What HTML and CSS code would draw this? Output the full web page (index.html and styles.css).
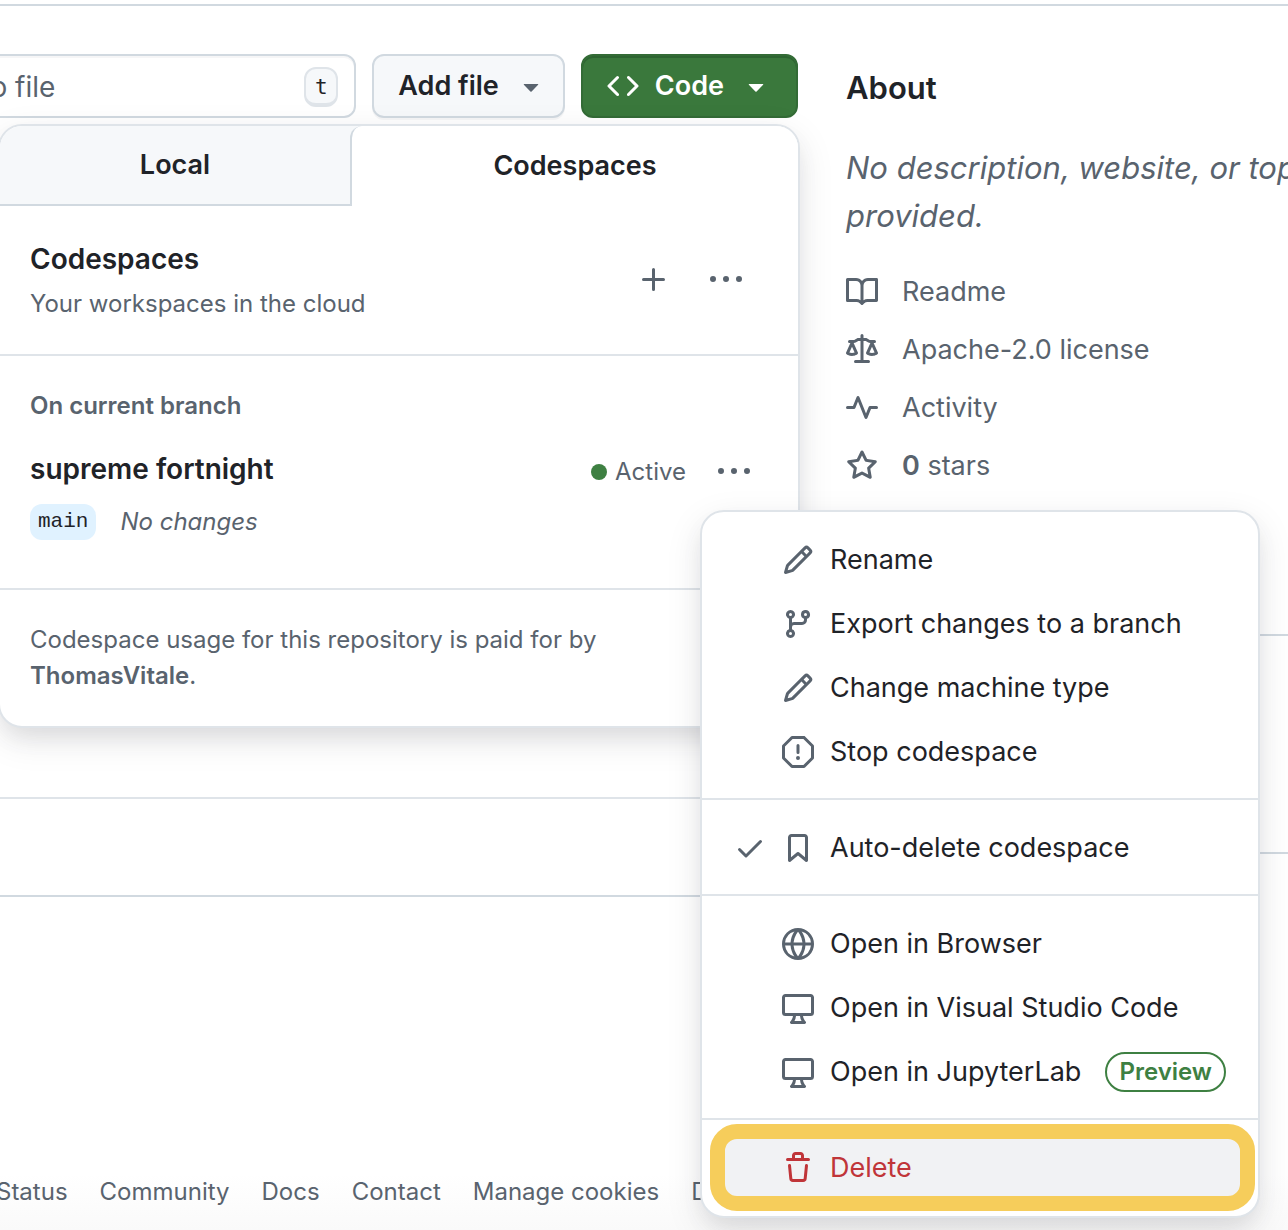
FILE: index.html
```html
<!DOCTYPE html>
<html lang="en">
<head>
<meta charset="utf-8">
<meta name="viewport" content="width=device-width, initial-scale=1">
<title>Codespaces</title>
<link rel="stylesheet" href="styles.css">
</head>
<body>
<div class="page">
  <main class="layout">
    <div class="content">
      <div class="toolbar">
        <div class="search">
          <input class="search-input" type="text" placeholder="Go to file" aria-label="Go to file">
          <kbd class="key">t</kbd>
        </div>
        <button class="btn" type="button">Add file
          <svg class="icon muted" viewBox="0 0 16 16" aria-hidden="true"><path d="m4.427 7.427 3.396 3.396a.25.25 0 0 0 .354 0l3.396-3.396A.25.25 0 0 0 11.396 7H4.604a.25.25 0 0 0-.177.427Z"/></svg>
        </button>
        <div class="code-menu">
          <button class="btn btn-primary" type="button" aria-expanded="true">
            <svg class="icon" viewBox="0 0 16 16" aria-hidden="true"><path d="m11.28 3.22 4.25 4.25a.75.75 0 0 1 0 1.06l-4.25 4.25a.749.749 0 0 1-1.275-.326.749.749 0 0 1 .215-.734L13.94 8l-3.72-3.72a.749.749 0 0 1 .326-1.275.749.749 0 0 1 .734.215Zm-6.56 0a.751.751 0 0 1 1.042.018.751.751 0 0 1 .018 1.042L2.06 8l3.72 3.72a.749.749 0 0 1-.326 1.275.749.749 0 0 1-.734-.215L.47 8.53a.75.75 0 0 1 0-1.06Z"/></svg>
            Code
            <svg class="icon" viewBox="0 0 16 16" aria-hidden="true"><path d="m4.427 7.427 3.396 3.396a.25.25 0 0 0 .354 0l3.396-3.396A.25.25 0 0 0 11.396 7H4.604a.25.25 0 0 0-.177.427Z"/></svg>
          </button>

          <div class="popover">
            <div class="tabs" role="tablist">
              <button class="tab" type="button" role="tab" aria-selected="false">Local</button>
              <button class="tab tab-active" type="button" role="tab" aria-selected="true">Codespaces</button>
            </div>

            <header class="panel panel-head">
              <div class="head-text">
                <h2 class="title">Codespaces</h2>
                <p class="note">Your workspaces in the cloud</p>
              </div>
              <div class="actions">
                <button class="icon-btn" type="button" aria-label="Create a codespace">
                  <svg class="icon" viewBox="0 0 16 16" aria-hidden="true"><path d="M7.75 2a.75.75 0 0 1 .75.75V7h4.25a.75.75 0 0 1 0 1.5H8.5v4.25a.75.75 0 0 1-1.5 0V8.5H2.75a.75.75 0 0 1 0-1.5H7V2.75A.75.75 0 0 1 7.75 2Z"/></svg>
                </button>
                <button class="icon-btn" type="button" aria-label="Repository configuration">
                  <svg class="icon" viewBox="0 0 16 16" aria-hidden="true"><path d="M8 9a1.5 1.5 0 1 0 0-3 1.5 1.5 0 0 0 0 3ZM1.5 9a1.5 1.5 0 1 0 0-3 1.5 1.5 0 0 0 0 3Zm13 0a1.5 1.5 0 1 0 0-3 1.5 1.5 0 0 0 0 3Z"/></svg>
                </button>
              </div>
            </header>

            <section class="panel panel-branch">
              <h3 class="group-label">On current branch</h3>
              <div class="space-row">
                <h4 class="title">supreme fortnight</h4>
                <span class="status"><span class="dot"></span>Active</span>
                <div class="space-menu">
                  <button class="icon-btn" type="button" aria-label="Codespace actions" aria-expanded="true">
                    <svg class="icon" viewBox="0 0 16 16" aria-hidden="true"><path d="M8 9a1.5 1.5 0 1 0 0-3 1.5 1.5 0 0 0 0 3ZM1.5 9a1.5 1.5 0 1 0 0-3 1.5 1.5 0 0 0 0 3Zm13 0a1.5 1.5 0 1 0 0-3 1.5 1.5 0 0 0 0 3Z"/></svg>
                  </button>

                  <div class="menu" role="menu">
                    <div class="menu-group">
                      <button class="menu-item" type="button" role="menuitem">
                        <svg class="icon" viewBox="0 0 16 16" aria-hidden="true"><path d="M11.013 1.427a1.75 1.75 0 0 1 2.474 0l1.086 1.086a1.75 1.75 0 0 1 0 2.474l-8.61 8.61c-.21.21-.47.364-.756.445l-3.251.93a.75.75 0 0 1-.927-.928l.929-3.25c.081-.286.235-.547.445-.758l8.61-8.61Zm.176 4.823L9.75 4.81l-6.286 6.287a.253.253 0 0 0-.064.108l-.558 1.953 1.953-.558a.253.253 0 0 0 .108-.064Zm1.238-3.763a.25.25 0 0 0-.354 0L10.811 3.75l1.439 1.44 1.263-1.263a.25.25 0 0 0 0-.354Z"/></svg>
                        Rename
                      </button>
                      <button class="menu-item" type="button" role="menuitem">
                        <svg class="icon" viewBox="0 0 16 16" aria-hidden="true"><path d="M9.5 3.25a2.25 2.25 0 1 1 3 2.122V6A2.5 2.5 0 0 1 10 8.5H6a1 1 0 0 0-1 1v1.128a2.251 2.251 0 1 1-1.5 0V5.372a2.25 2.25 0 1 1 1.5 0v1.836A2.493 2.493 0 0 1 6 7h4a1 1 0 0 0 1-1v-.628A2.25 2.25 0 0 1 9.5 3.25Zm-6 0a.75.75 0 1 0 1.5 0 .75.75 0 0 0-1.5 0Zm8.25-.75a.75.75 0 1 0 0 1.5.75.75 0 0 0 0-1.5ZM4.25 12a.75.75 0 1 0 0 1.5.75.75 0 0 0 0-1.5Z"/></svg>
                        Export changes to a branch
                      </button>
                      <button class="menu-item" type="button" role="menuitem">
                        <svg class="icon" viewBox="0 0 16 16" aria-hidden="true"><path d="M11.013 1.427a1.75 1.75 0 0 1 2.474 0l1.086 1.086a1.75 1.75 0 0 1 0 2.474l-8.61 8.61c-.21.21-.47.364-.756.445l-3.251.93a.75.75 0 0 1-.927-.928l.929-3.25c.081-.286.235-.547.445-.758l8.61-8.61Zm.176 4.823L9.75 4.81l-6.286 6.287a.253.253 0 0 0-.064.108l-.558 1.953 1.953-.558a.253.253 0 0 0 .108-.064Zm1.238-3.763a.25.25 0 0 0-.354 0L10.811 3.75l1.439 1.44 1.263-1.263a.25.25 0 0 0 0-.354Z"/></svg>
                        Change machine type
                      </button>
                      <button class="menu-item" type="button" role="menuitem">
                        <svg class="icon" viewBox="0 0 16 16" aria-hidden="true"><path d="M4.47.22A.749.749 0 0 1 5 0h6c.199 0 .389.079.53.22l4.25 4.25c.141.14.22.331.22.53v6a.749.749 0 0 1-.22.53l-4.25 4.25A.749.749 0 0 1 11 16H5a.749.749 0 0 1-.53-.22L.22 11.53A.749.749 0 0 1 0 11V5c0-.199.079-.389.22-.53Zm.84 1.28L1.5 5.31v5.38l3.81 3.81h5.38l3.81-3.81V5.31L10.69 1.5ZM8 4a.75.75 0 0 1 .75.75v3.5a.75.75 0 0 1-1.5 0v-3.5A.75.75 0 0 1 8 4Zm0 8a1 1 0 1 1 0-2 1 1 0 0 1 0 2Z"/></svg>
                        Stop codespace
                      </button>
                    </div>
                    <div class="menu-group">
                      <button class="menu-item menu-item-checked" type="button" role="menuitemcheckbox" aria-checked="true">
                        <svg class="icon" viewBox="0 0 16 16" aria-hidden="true"><path d="M13.78 4.22a.75.75 0 0 1 0 1.06l-7.25 7.25a.75.75 0 0 1-1.06 0L2.22 9.28a.751.751 0 0 1 .018-1.042.751.751 0 0 1 1.042-.018L6 10.94l6.72-6.72a.75.75 0 0 1 1.06 0Z"/></svg>
                        <svg class="icon" viewBox="0 0 16 16" aria-hidden="true"><path d="M3 2.75C3 1.784 3.784 1 4.75 1h6.5c.966 0 1.75.784 1.75 1.75v11.5a.75.75 0 0 1-1.227.579L8 11.722l-3.773 3.107A.751.751 0 0 1 3 14.25Zm1.75-.25a.25.25 0 0 0-.25.25v9.91l3.023-2.489a.75.75 0 0 1 .954 0l3.023 2.49V2.75a.25.25 0 0 0-.25-.25Z"/></svg>
                        Auto-delete codespace
                      </button>
                    </div>
                    <div class="menu-group">
                      <button class="menu-item" type="button" role="menuitem">
                        <svg class="icon" viewBox="0 0 16 16" aria-hidden="true"><path d="M8 0a8 8 0 1 1 0 16A8 8 0 0 1 8 0ZM5.78 8.75a9.64 9.64 0 0 0 1.363 4.177c.255.426.542.832.857 1.215.245-.296.551-.705.857-1.215A9.64 9.64 0 0 0 10.22 8.75Zm4.44-1.5a9.64 9.64 0 0 0-1.363-4.177c-.307-.51-.612-.919-.857-1.215a9.927 9.927 0 0 0-.857 1.215A9.64 9.64 0 0 0 5.78 7.25Zm-5.944 1.5H1.543a6.507 6.507 0 0 0 4.666 5.5c-.123-.181-.24-.365-.352-.552-.715-1.192-1.437-2.874-1.581-4.948Zm-2.733-1.5h2.733c.144-2.074.866-3.756 1.58-4.948.12-.197.237-.381.353-.552a6.507 6.507 0 0 0-4.666 5.5Zm10.181 1.5c-.144 2.074-.866 3.756-1.58 4.948-.12.197-.237.381-.353.552a6.507 6.507 0 0 0 4.666-5.5Zm2.733-1.5a6.507 6.507 0 0 0-4.666-5.5c.123.181.24.365.353.552.714 1.192 1.436 2.874 1.58 4.948Z"/></svg>
                        Open in Browser
                      </button>
                      <button class="menu-item" type="button" role="menuitem">
                        <svg class="icon" viewBox="0 0 16 16" aria-hidden="true"><path d="M14.25 1c.966 0 1.75.784 1.75 1.75v7.5A1.75 1.75 0 0 1 14.25 12h-3.727c.099 1.041.52 1.872 1.292 2.757A.752.752 0 0 1 11.25 16h-6.5a.75.75 0 0 1-.565-1.243c.772-.885 1.192-1.716 1.292-2.757H1.75A1.75 1.75 0 0 1 0 10.25v-7.5C0 1.784.784 1 1.75 1ZM1.75 2.5a.25.25 0 0 0-.25.25v7.5c0 .138.112.25.25.25h12.5a.25.25 0 0 0 .25-.25v-7.5a.25.25 0 0 0-.25-.25ZM9.018 12H6.982a5.72 5.72 0 0 1-.765 2.5h3.566a5.72 5.72 0 0 1-.765-2.5Z"/></svg>
                        Open in Visual Studio Code
                      </button>
                      <button class="menu-item" type="button" role="menuitem">
                        <svg class="icon" viewBox="0 0 16 16" aria-hidden="true"><path d="M14.25 1c.966 0 1.75.784 1.75 1.75v7.5A1.75 1.75 0 0 1 14.25 12h-3.727c.099 1.041.52 1.872 1.292 2.757A.752.752 0 0 1 11.25 16h-6.5a.75.75 0 0 1-.565-1.243c.772-.885 1.192-1.716 1.292-2.757H1.75A1.75 1.75 0 0 1 0 10.25v-7.5C0 1.784.784 1 1.75 1ZM1.75 2.5a.25.25 0 0 0-.25.25v7.5c0 .138.112.25.25.25h12.5a.25.25 0 0 0 .25-.25v-7.5a.25.25 0 0 0-.25-.25ZM9.018 12H6.982a5.72 5.72 0 0 1-.765 2.5h3.566a5.72 5.72 0 0 1-.765-2.5Z"/></svg>
                        Open in JupyterLab
                        <span class="label">Preview</span>
                      </button>
                    </div>
                    <div class="menu-group">
                      <button class="menu-item menu-item-danger" type="button" role="menuitem">
                        <svg class="icon" viewBox="0 0 16 16" aria-hidden="true"><path d="M11 1.75V3h2.25a.75.75 0 0 1 0 1.5H2.75a.75.75 0 0 1 0-1.5H5V1.75C5 .784 5.784 0 6.75 0h2.5C10.216 0 11 .784 11 1.75ZM4.496 6.675l.66 6.6a.25.25 0 0 0 .249.225h5.19a.25.25 0 0 0 .249-.225l.66-6.6a.75.75 0 0 1 1.492.149l-.66 6.6A1.748 1.748 0 0 1 10.595 15h-5.19a1.75 1.75 0 0 1-1.741-1.575l-.66-6.6a.75.75 0 1 1 1.492-.15ZM6.5 1.75V3h3V1.75a.25.25 0 0 0-.25-.25h-2.5a.25.25 0 0 0-.25.25Z"/></svg>
                        Delete
                      </button>
                    </div>
                  </div>
                </div>
              </div>
              <div class="branch-row">
                <a class="branch" href="#">main</a>
                <em class="note">No changes</em>
              </div>
            </section>

            <p class="panel note billing">Codespace usage for this repository is paid for by <strong>ThomasVitale</strong>.</p>
          </div>
        </div>
      </div>

      <div class="files">
        <div class="files-body"></div>
        <div class="files-row"></div>
      </div>
    </div>

    <aside class="sidebar">
      <section class="about">
        <h2 class="about-title">About</h2>
        <p class="about-text">No description, website, or topics provided.</p>
        <ul class="facts">
          <li><a class="fact" href="#">
            <svg class="icon" viewBox="0 0 16 16" aria-hidden="true"><path d="M0 1.75A.75.75 0 0 1 .75 1h4.253c1.227 0 2.317.59 3 1.501A3.743 3.743 0 0 1 11.006 1h4.245a.75.75 0 0 1 .75.75v10.5a.75.75 0 0 1-.75.75h-4.507a2.25 2.25 0 0 0-1.591.659l-.622.621a.75.75 0 0 1-1.06 0l-.622-.621A2.25 2.25 0 0 0 5.258 13H.75a.75.75 0 0 1-.75-.75Zm7.251 10.324.004-5.073-.002-2.253A2.25 2.25 0 0 0 5.003 2.5H1.5v9h3.757a3.75 3.75 0 0 1 1.994.574ZM8.755 4.75l-.004 7.322a3.752 3.752 0 0 1 1.992-.572H14.5v-9h-3.495a2.25 2.25 0 0 0-2.25 2.25Z"/></svg>
            <span>Readme</span></a></li>
          <li><a class="fact" href="#">
            <svg class="icon" viewBox="0 0 16 16" aria-hidden="true"><path d="M8.75.75V2h.985c.304 0 .603.08.867.231l1.29.736c.038.022.08.033.124.033h2.234a.75.75 0 0 1 0 1.5h-.427l2.111 4.692a.75.75 0 0 1-.154.838l-.53-.53.529.531-.001.002-.002.002-.006.006-.006.005-.01.01-.045.04c-.21.176-.441.327-.686.45C14.556 10.78 13.88 11 13 11a4.498 4.498 0 0 1-2.023-.454 3.544 3.544 0 0 1-.686-.45l-.045-.04-.016-.015-.006-.006-.004-.004v-.001a.75.75 0 0 1-.154-.838L12.178 4.5h-.162c-.305 0-.604-.079-.868-.231l-1.29-.736a.245.245 0 0 0-.124-.033H8.75V13h2.5a.75.75 0 0 1 0 1.5h-6.5a.75.75 0 0 1 0-1.5h2.5V3.5h-.984a.245.245 0 0 0-.124.033l-1.289.737c-.265.15-.564.23-.869.23h-.162l2.112 4.692a.75.75 0 0 1-.154.838l-.53-.53.529.531-.001.002-.002.002-.006.006-.016.015-.045.04c-.21.176-.441.327-.686.45C4.556 10.78 3.88 11 3 11a4.498 4.498 0 0 1-2.023-.454 3.544 3.544 0 0 1-.686-.45l-.045-.04-.016-.015-.006-.006-.004-.004v-.001a.75.75 0 0 1-.154-.838L2.178 4.5H1.75a.75.75 0 0 1 0-1.5h2.234a.249.249 0 0 0 .125-.033l1.288-.737c.265-.15.564-.23.869-.23h.984V.75a.75.75 0 0 1 1.5 0Zm2.945 8.477c.285.135.718.273 1.305.273s1.02-.138 1.305-.273L13 6.327Zm-10 0c.285.135.718.273 1.305.273s1.02-.138 1.305-.273L3 6.327Z"/></svg>
            <span>Apache-2.0 license</span></a></li>
          <li><a class="fact" href="#">
            <svg class="icon" viewBox="0 0 16 16" aria-hidden="true"><path d="M6 2c.306 0 .582.187.696.471L10 10.731l1.304-3.26A.751.751 0 0 1 12 7h3.25a.75.75 0 0 1 0 1.5h-2.742l-1.812 4.528a.751.751 0 0 1-1.392 0L6 4.77 4.696 8.03A.75.75 0 0 1 4 8.5H.75a.75.75 0 0 1 0-1.5h2.742l1.812-4.529A.751.751 0 0 1 6 2Z"/></svg>
            <span>Activity</span></a></li>
          <li><a class="fact" href="#">
            <svg class="icon" viewBox="0 0 16 16" aria-hidden="true"><path d="M8 .25a.75.75 0 0 1 .673.418l1.882 3.815 4.21.612a.75.75 0 0 1 .416 1.279l-3.046 2.97.719 4.192a.751.751 0 0 1-1.088.791L8 12.347l-3.766 1.98a.75.75 0 0 1-1.088-.79l.72-4.194L.818 6.374a.75.75 0 0 1 .416-1.28l4.21-.611L7.327.668A.75.75 0 0 1 8 .25Zm0 2.445L6.615 5.5a.75.75 0 0 1-.564.41l-3.097.45 2.24 2.184a.75.75 0 0 1 .216.664l-.528 3.084 2.769-1.456a.75.75 0 0 1 .698 0l2.77 1.456-.53-3.084a.75.75 0 0 1 .216-.664l2.24-2.183-3.096-.45a.75.75 0 0 1-.564-.41L8 2.694Z"/></svg>
            <span><strong>0</strong> stars</span></a></li>
        </ul>
      </section>
      <section class="side-block"></section>
    </aside>
  </main>

  <footer class="footer">
    <a href="#">Status</a>
    <a href="#">Community</a>
    <a href="#">Docs</a>
    <a href="#">Contact</a>
    <a href="#">Manage cookies</a>
    <a href="#">Do not share my personal information</a>
  </footer>
</div>
</body>
</html>
```
FILE: styles.css
```css
:root {
  --fg: #1f2328;
  --muted: #59636e;
  --border: #d1d9e0;
  --border-soft: #dfe4e9;
  --subtle: #f6f8fa;
  --green: #3a783c;
  --text-xl: 31px;
  --text-l: 28px;
  --text-m: 27px;
  --text-s: 24px;
}

* {
  box-sizing: border-box;
}

body {
  margin: 0;
  overflow: hidden;
  background: #fff;
  color: var(--fg);
  font-family: Inter, "Liberation Sans", sans-serif;
  font-size: var(--text-m);
  line-height: 42px;
}

h2, h3, h4, p, ul {
  margin: 0;
  padding: 0;
}

h2, h3, h4, strong {
  font-weight: 600;
}

button {
  padding: 0;
  border: 0;
  background: none;
  color: inherit;
  font: inherit;
  cursor: pointer;
}

a {
  color: inherit;
  text-decoration: none;
}

.icon {
  flex: none;
  display: block;
  width: 32px;
  height: 32px;
  fill: currentColor;
}

.muted {
  color: var(--muted);
}

/* The page is wider than the window and is cut off on both sides. */
.page {
  display: flex;
  flex-direction: column;
  min-height: 100vh;
  margin: 0 -150px 0 -130px;
  padding-top: 4px;
}

.layout {
  display: grid;
  grid-template-columns: minmax(0, 1fr) 592px;
  gap: 48px;
  padding-top: 48px;
  border-top: 2px solid var(--border);
}

/* Toolbar */
.toolbar {
  display: flex;
  gap: 16px;
}

.search {
  flex: 1;
  display: flex;
  align-items: center;
  min-width: 0;
  padding: 2px 16px 0 64px;
  border: 2px solid var(--border);
  border-radius: 12px;
  box-shadow: inset 0 2px 0 rgba(31, 35, 40, 0.04);
}

.search-input {
  flex: 1;
  min-width: 0;
  padding: 0;
  border: 0;
  outline: 0;
  background: none;
  color: var(--fg);
  font: inherit;
  font-size: var(--text-l);
}

.search-input::placeholder {
  color: var(--muted);
  opacity: 1;
}

.key {
  width: 34px;
  height: 40px;
  border: 2px solid var(--border-soft);
  border-bottom-width: 4px;
  border-radius: 12px;
  background: var(--subtle);
  font-family: "DejaVu Sans Mono", "Liberation Mono", monospace;
  font-size: 21px;
  line-height: 36px;
  text-align: center;
}

.btn {
  display: flex;
  align-items: center;
  gap: 16px;
  height: 64px;
  padding: 0 16px 0 24px;
  border: 2px solid var(--border);
  border-radius: 12px;
  background: var(--subtle);
  box-shadow: 0 2px 0 rgba(31, 35, 40, 0.04);
  font-weight: 600;
  white-space: nowrap;
}

.btn-primary {
  padding-right: 24px;
  border-color: #336b36;
  background: var(--green);
  box-shadow: inset 0 2px 0 #2d6431;
  color: #fff;
}

.code-menu {
  position: relative;
}

/* Code popover */
.popover {
  position: absolute;
  top: 70px;
  right: -2px;
  width: 802px;
  border: 2px solid var(--border-soft);
  border-radius: 24px;
  background: #fff;
  box-shadow: 0 12px 24px -6px rgba(37, 41, 46, 0.1), 0 12px 36px rgba(37, 41, 46, 0.1);
}

.tabs {
  display: grid;
  grid-template-columns: 350px 1fr;
  border-radius: 22px 22px 0 0;
  background: var(--subtle);
}

.tab {
  height: 80px;
  border-bottom: 2px solid var(--border);
  font-weight: 600;
}

.tab-active {
  border-bottom: 0;
  border-left: 2px solid var(--border);
  border-radius: 12px 22px 0 0;
  background: #fff;
}

.panel {
  padding: 32px 30px;
  border-bottom: 2px solid var(--border-soft);
}

.panel:last-child {
  border-bottom: 0;
}

.panel-head {
  display: flex;
  align-items: center;
  justify-content: space-between;
}

.head-text {
  display: grid;
  gap: 6px;
}

.title {
  font-size: var(--text-l);
}

.note {
  color: var(--muted);
  font-size: var(--text-s);
  line-height: 36px;
}

.actions {
  display: flex;
  gap: 40px;
  padding-right: 26px;
}

.icon-btn {
  display: flex;
  align-items: center;
  height: 36px;
  color: var(--muted);
}

.group-label {
  color: var(--muted);
  font-size: var(--text-s);
  line-height: 36px;
}

.space-row {
  display: flex;
  align-items: flex-end;
  gap: 32px;
  padding: 24px 18px 14px 0;
}

.status {
  display: flex;
  align-items: center;
  gap: 8px;
  margin-left: auto;
  color: var(--muted);
  font-size: var(--text-s);
  line-height: 36px;
}

.dot {
  width: 16px;
  height: 16px;
  border-radius: 50%;
  background: #3e8042;
}

.branch-row {
  display: flex;
  align-items: center;
  gap: 24px;
  padding-bottom: 16px;
}

.branch {
  padding: 0 8px;
  border-radius: 12px;
  background: #e0f2ff;
  font-family: "Liberation Mono", monospace;
  font-size: 21px;
  line-height: 36px;
}

.billing {
  max-width: 660px;
}

/* Codespace actions menu */
.space-menu {
  position: relative;
}

.menu {
  position: absolute;
  z-index: 1;
  top: 56px;
  left: -18px;
  width: 560px;
  border: 2px solid var(--border-soft);
  border-radius: 24px;
  background: #fff;
  box-shadow: 0 12px 24px -6px rgba(37, 41, 46, 0.1), 0 12px 36px rgba(37, 41, 46, 0.1);
}

.menu-group {
  padding: 16px 16px 14px;
  border-bottom: 2px solid var(--border-soft);
}

.menu-group:last-child {
  padding-bottom: 16px;
  border-bottom: 0;
}

.menu-item {
  position: relative;
  display: flex;
  align-items: center;
  gap: 16px;
  width: 100%;
  height: 64px;
  padding: 0 16px 0 64px;
  border-radius: 12px;
  text-align: left;
  white-space: nowrap;
}

.menu-item .icon {
  color: var(--muted);
}

.menu-item-checked {
  padding-left: 16px;
}

.menu-item-danger,
.menu-item-danger .icon {
  color: #c03539;
}

.menu-item-danger {
  background: #f1f2f4;
}

/* Highlight ring around the delete action */
.menu-item-danger::after {
  content: "";
  position: absolute;
  inset: -12px -13px -11px -8px;
  border: 15px solid #f6cd5b;
  border-radius: 27px;
}

.label {
  margin-left: auto;
  padding: 0 12px;
  border: 2px solid #3e8042;
  border-radius: 20px;
  color: #3e8042;
  font-size: var(--text-s);
  font-weight: 600;
  line-height: 36px;
}

/* File list behind the popover */
.files {
  margin-top: 32px;
  border: 2px solid var(--border);
  border-radius: 12px;
}

.files-body {
  min-height: 645px;
}

.files-row {
  min-height: 98px;
  border-top: 2px solid var(--border-soft);
}

/* Sidebar */
.about,
.side-block {
  border-bottom: 2px solid var(--border);
}

.about {
  padding: 10px 0 148px;
}

.about-title {
  font-size: var(--text-xl);
  line-height: 48px;
}

.about-text {
  margin: 32px 0;
  color: var(--muted);
  font-size: var(--text-xl);
  font-style: italic;
  line-height: 48px;
}

.facts {
  display: grid;
  gap: 18px;
  color: var(--muted);
  line-height: 40px;
  list-style: none;
}

.fact {
  display: flex;
  align-items: center;
  gap: 24px;
}

.side-block {
  min-height: 218px;
}

/* Footer */
.footer {
  display: flex;
  gap: 32px;
  margin-top: auto;
  padding: 0 0 20px 126px;
  background: linear-gradient(#fff, #fafafa);
  color: var(--muted);
  font-size: var(--text-s);
  line-height: 36px;
  white-space: nowrap;
}
```
